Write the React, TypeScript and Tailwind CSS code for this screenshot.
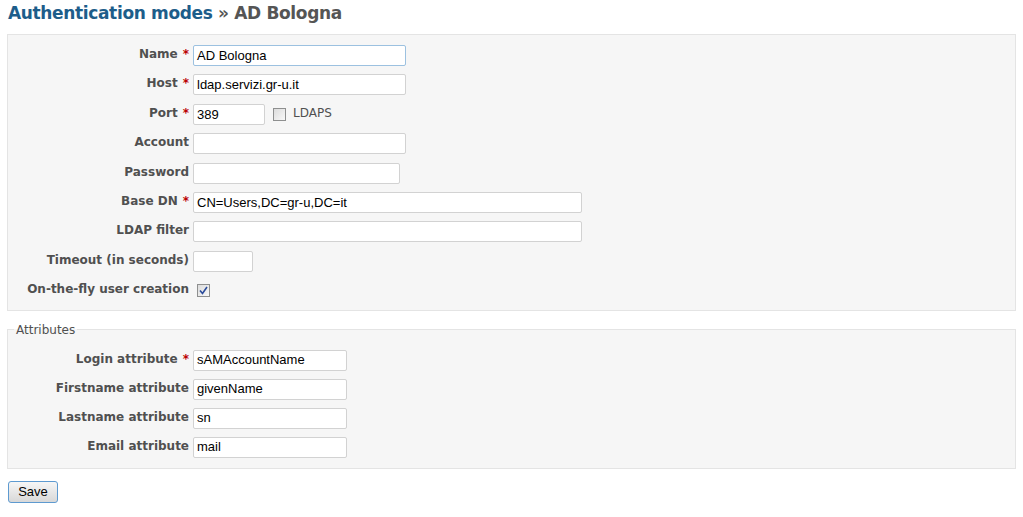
import React from 'react';

const labelFont = { fontFamily: '"DejaVu Sans", Verdana, sans-serif' };

interface RowProps {
  label: string;
  required?: boolean;
  tight?: boolean;
  children: React.ReactNode;
}

const Row: React.FC<RowProps> = ({ label, required, tight, children }) => (
  <div className={`flex items-start ${tight ? 'h-[29px]' : 'h-[29.4px]'}`}>
    <div
      className="w-[185px] shrink-0 pr-[4px] pt-[2px] text-right text-[12px] font-bold leading-[15px] text-[#505050]"
      style={labelFont}
    >
      {label}
      {required && <span className="ml-[5px] text-[#bb0000]">*</span>}
    </div>
    {children}
  </div>
);

const TextInput: React.FC<{ value?: string; w: string; focused?: boolean }> = ({ value = '', w, focused }) => (
  <div
    className={`flex h-[21px] items-center rounded-[2px] border bg-white px-[3px] font-['Liberation_Sans',Arial,sans-serif] text-[13px] text-black ${w} ${
      focused ? 'border-[#9cc1e0]' : 'border-[#d2d2d2]'
    }`}
  >
    {value}
  </div>
);

const Checkbox: React.FC<{ checked?: boolean }> = ({ checked }) => (
  <div className="flex h-[13px] w-[13px] items-center justify-center border border-[#8e8f8f] bg-gradient-to-br from-[#dcdcdc] to-[#f8f8f8]">
    {checked && (
      <svg width="9" height="9" viewBox="0 0 9 9">
        <path d="M1 4.5 L3.5 7.5 L8 1" fill="none" stroke="#2a4b9b" strokeWidth="1.6" />
      </svg>
    )}
  </div>
);

export default function App() {
  return (
    <div className="min-h-[517px] bg-white px-[7px] pt-[1px]">
      <h2
        className="ml-[1px] h-[33px] text-[17px] font-bold leading-[24px] tracking-[-0.35px] text-[#555]"
        style={labelFont}
      >
        <span className="text-[#1d5d8a]">Authentication modes</span> » AD Bologna
      </h2>

      <div className="border border-[#e4e4e4] bg-[#f6f6f6] pt-[10px]">
        <Row label="Name" required>
          <TextInput value="AD Bologna" w="w-[213px]" focused />
        </Row>
        <Row label="Host" required>
          <TextInput value="ldap.servizi.gr-u.it" w="w-[213px]" />
        </Row>
        <Row label="Port" required>
          <TextInput value="389" w="w-[72px]" />
          <div className="ml-[8px] mt-[4px]">
            <Checkbox />
          </div>
          <span className="ml-[7px] pt-[2px] text-[12px] leading-[15px] text-[#505050]" style={labelFont}>
            LDAPS
          </span>
        </Row>
        <Row label="Account">
          <TextInput w="w-[213px]" />
        </Row>
        <Row label="Password">
          <TextInput w="w-[207px]" />
        </Row>
        <Row label="Base DN" required>
          <TextInput value="CN=Users,DC=gr-u,DC=it" w="w-[389px]" />
        </Row>
        <Row label="LDAP filter">
          <TextInput w="w-[389px]" />
        </Row>
        <Row label="Timeout (in seconds)">
          <TextInput w="w-[60px]" />
        </Row>
        <Row label="On-the-fly user creation">
          <div className="ml-[4px] mt-[4px]">
            <Checkbox checked />
          </div>
        </Row>
      </div>

      <fieldset className="mt-[13px] border border-[#e4e4e4] bg-[#f6f6f6] pb-[10px]">
        <legend
          className="ml-[6px] px-[2px] text-[12px] leading-[12px] text-[#505050]"
          style={labelFont}
        >
          Attributes
        </legend>
        <div className="pt-[14px]">
          <Row label="Login attribute" required tight>
            <TextInput value="sAMAccountName" w="w-[154px]" />
          </Row>
          <Row label="Firstname attribute" tight>
            <TextInput value="givenName" w="w-[154px]" />
          </Row>
          <Row label="Lastname attribute" tight>
            <TextInput value="sn" w="w-[154px]" />
          </Row>
          <div className="h-[21px]">
            <Row label="Email attribute" tight>
              <TextInput value="mail" w="w-[154px]" />
            </Row>
          </div>
        </div>
      </fieldset>

      <button className="ml-[1px] mt-[12px] h-[22px] w-[50px] rounded-[3px] border border-[#5e9ad0] bg-gradient-to-b from-[#f6f6f6] to-[#d8d8d8] font-['Liberation_Sans',Arial,sans-serif] text-[13px] text-black">
        Save
      </button>
    </div>
  );
}
